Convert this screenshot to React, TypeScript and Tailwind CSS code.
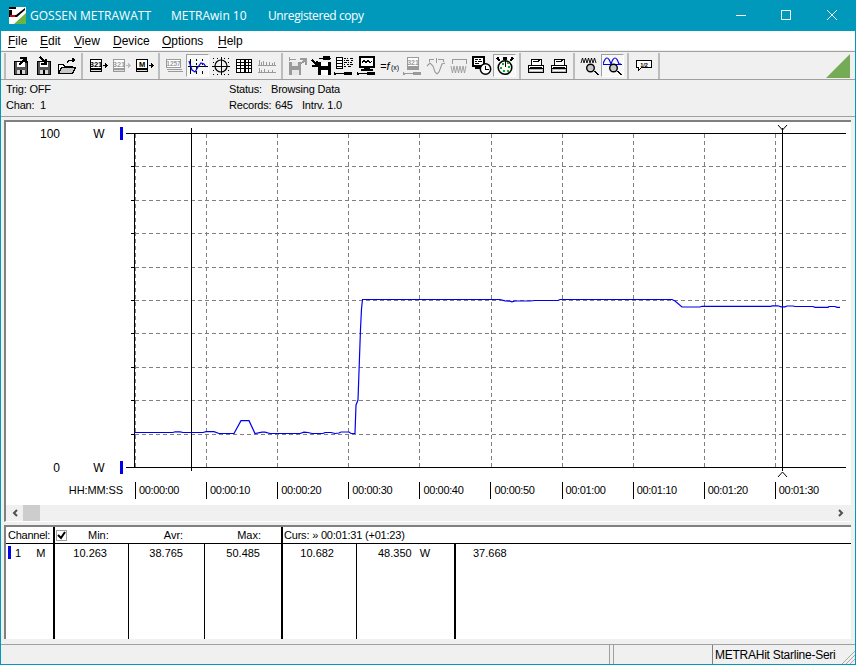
const ui = { fontFamily: '"Liberation Sans", Arial, sans-serif' };

const Ico = ({ children }: { children: React.ReactNode }) => (
  <svg width="20" height="20" viewBox="0 0 20 20" shapeRendering="crispEdges" fill="none">
    {children}
  </svg>
);

const Btn = ({ children, active }: { children: React.ReactNode; active?: boolean }) => (
  <div
    className={
      "w-[23px] h-[23px] flex items-center justify-center " +
      (active ? "bg-[#f8f8f8] border border-t-[#a0a0a0] border-l-[#a0a0a0] border-r-white border-b-white" : "")
    }
  >
    {children}
  </div>
);

const Sep = () => (
  <div className="w-[8px] h-[26px] flex justify-center">
    <div className="w-[2px] h-full bg-[#bcbcbc]" />
  </div>
);

const Floppy = ({ c = "#000", down }: { c?: string; down?: boolean }) => (
  <Ico>
    <path d="M3.5 5.5h13v13h-13z" fill="#555" stroke={c} />
    <path d="M6 6h8v5H6z" fill="#fff" />
    <path d="M6 14h8v4H6z" fill="#d8d8d8" />
    <path d="M9 14h2v4H9z" fill={c} />
    {down ? (
      <path d="M6 1l6 6M12 3v5H7" stroke={c} strokeWidth="2" />
    ) : (
      <path d="M8 9l6-6M9 2h6v5" stroke={c} strokeWidth="2" />
    )}
  </Ico>
);

const Device = ({ c = "#000", label = "321", arrow = true, x }: { c?: string; label?: string; arrow?: boolean; x?: boolean }) => (
  <Ico>
    <path d="M2 3h12v13H2z" fill={c} />
    <path d="M3 4h10v8H3z" fill="#fff" />
    <text x="8" y="11" textAnchor="middle" fontSize="7.5" fontWeight="700" fill={c} style={ui}>
      {label}
    </text>
    <path d="M3 14h10" stroke="#ddd" />
    {arrow && <path d="M15 9h2M17 7v5M18 8v3M19 9v1" stroke={x ? "#bbb" : c} />}
  </Ico>
);

const Probe = ({ c = "#000" }: { c?: string }) => (
  <>
    <path d="M0 17.5h14" stroke={c} />
    <path d="M10 16h8v3h-8z" fill={c} />
    <path d="M0 16v3M1 16.5v2" stroke={c} />
  </>
);

const Printer = () => (
  <Ico>
    <path d="M5.5 3.5h10v6h-10z" fill="#fff" stroke="#000" />
    <path d="M7 6l2-1 2 1 3-2" stroke="#000" />
    <path d="M2.5 9.5h15v3h-15z" fill="#fff" stroke="#000" />
    <path d="M2.5 12.5h15v4h-15z" fill="#bbb" stroke="#000" />
    <path d="M4 11h12" stroke="#000" />
    <path d="M4 14.5h12" stroke="#fff" />
  </Ico>
);

const Magnifier = () => (
  <>
    <circle cx="10.5" cy="12" r="3.8" fill="#c8c8c8" stroke="#000" strokeWidth="1.4" shapeRendering="auto" />
    <path d="M14 15l4 4M15 15l4 4" stroke="#000" />
  </>
);

const Toolbar = () => (
  <div className="h-[29px] border-y border-[#a0a0a0] flex items-center shrink-0 pr-[5px]">
    <Sep />
    <Btn><Floppy /></Btn>
    <Btn><Floppy down /></Btn>
    <Btn>
      <Ico>
        <path d="M1.5 8.5h5l1 2h8v7h-14z" fill="#fff" stroke="#000" />
        <path d="M1.5 17.5l3-6h14l-3 6z" fill="#c8c8c8" stroke="#000" />
        <path d="M10 7l2-3h3M15 2v4l3-2z" stroke="#000" />
      </Ico>
    </Btn>
    <Sep />
    <Btn><Device /></Btn>
    <Btn><Device c="#9a9a9a" x /></Btn>
    <Btn><Device label="M" /></Btn>
    <Sep />
    <Btn>
      <Ico>
        <path d="M1.5 3.5h14v8h-14z" fill="#fff" stroke="#9a9a9a" />
        <text x="8.5" y="10" textAnchor="middle" fontSize="6.5" fontWeight="700" fill="#9a9a9a" style={ui}>1257</text>
        <path d="M2 13.5h15M3 15.5h15" stroke="#9a9a9a" />
      </Ico>
    </Btn>
    <Btn active>
      <Ico>
        <path d="M2 3v15M8 3v2M8 7v2M8 11v2M8 15v3M14 3v2M14 7v2M14 15v3" stroke="#000" />
        <path d="M0 10h20" stroke="#000" />
        <path d="M1 5l3 9 3 2 3-5 3-4 3 1 2 3" stroke="#0000e0" strokeWidth="1.2" shapeRendering="auto" />
      </Ico>
    </Btn>
    <Btn>
      <Ico>
        <circle cx="10" cy="10" r="6" stroke="#000" strokeWidth="1.2" shapeRendering="auto" />
        <path d="M10 1v18M1 10h18" stroke="#000" />
        <path d="M2 2h1M6 2h1M13 2h1M17 2h1M2 6h1M17 6h1M2 14h1M17 14h1M2 18h1M6 18h1M13 18h1M17 18h1" stroke="#000" />
      </Ico>
    </Btn>
    <Btn>
      <Ico>
        <path d="M2.5 3.5h15v13h-15z" fill="#fff" stroke="#000" />
        <path d="M2 6.5h16M2 9.5h16M2 12.5h16" stroke="#000" />
        <path d="M6.5 3v14M10.5 3v14M11.5 3v14M14.5 3v14" stroke="#000" />
      </Ico>
    </Btn>
    <Btn>
      <Ico>
        <path d="M2 4v5M4 6v3M6 5v4M9 6v3M12 6v3M15 7v2M17 6v3M2 12v4M4 14v2M7 13v3M11 14v2M15 14v2" stroke="#9a9a9a" />
        <path d="M1 9.5h18M1 16.5h18" stroke="#9a9a9a" />
      </Ico>
    </Btn>
    <Sep />
    <Btn>
      <Ico>
        <path d="M1 3h7M1 1v4" stroke="#9a9a9a" />
        <path d="M1 6h12v13H1z" fill="#9a9a9a" />
        <path d="M4 6h6v4H4zM4 14h7v5H4z" fill="#e8e8e8" />
        <path d="M10 10l7-6M12 3h6v6" stroke="#9a9a9a" strokeWidth="2" />
      </Ico>
    </Btn>
    <Btn>
      <Ico>
        <path d="M8 2h12" stroke="#000" />
        <path d="M12 0h7v4h-7z" fill="#000" />
        <path d="M7 6h13v13H7z" fill="#000" />
        <path d="M10 6h7v4h-7zM10 14h7v5h-7z" fill="#fff" />
        <path d="M1 4l5 5M6 5v5H1" stroke="#000" strokeWidth="2" />
      </Ico>
    </Btn>
    <Btn>
      <Ico>
        <path d="M2 1h6v11H2z" fill="#fff" stroke="#000" />
        <path d="M2 4h6M2 7h6M2 10h6" stroke="#000" />
        <path d="M10 2h2M13 2h1M16 2h3M10 4h1M12 4h3M17 4h2M10 6h3M14 6h1M16 6h2M10 8h1M13 8h2M16 8h3M10 10h2M14 10h3" stroke="#000" />
        <Probe />
      </Ico>
    </Btn>
    <Btn>
      <Ico>
        <path d="M3 1h14v10H3z" fill="#fff" stroke="#000" strokeWidth="1.5" />
        <path d="M5 7l2-3 2 3 2-3 2 3 2-2" stroke="#000" />
        <path d="M7 12h6v1H7zM4 13h12v2H4z" fill="#000" />
        <Probe />
      </Ico>
    </Btn>
    <Btn>
      <svg width="22" height="20" viewBox="0 0 22 20">
        <text x="1" y="14" fontSize="11" fontStyle="italic" fill="#000" style={ui}>=f</text>
        <text x="12" y="14" fontSize="7" fill="#000" style={ui}>(x)</text>
      </svg>
    </Btn>
    <Btn>
      <Ico>
        <path d="M4 1h12v13H4z" fill="#9a9a9a" />
        <path d="M5 2h10v8H5z" fill="#fff" />
        <text x="10" y="9" textAnchor="middle" fontSize="7" fontWeight="700" fill="#9a9a9a" style={ui}>321</text>
        <Probe c="#9a9a9a" />
      </Ico>
    </Btn>
    <Btn>
      <Ico>
        <path d="M3 3h5M12 3h5M3 3v3M17 3v3M10 2v5" stroke="#9a9a9a" />
        <path d="M1 10l3-3 3 3 2 6 2 2 2-2 3-8 3-1" stroke="#9a9a9a" strokeWidth="1.1" shapeRendering="auto" />
      </Ico>
    </Btn>
    <Btn>
      <Ico>
        <path d="M3 3.5h14M3 3v5M17 3v5" stroke="#9a9a9a" />
        <path d="M2 10l1.500 7 1.500-7 1.500 7 1.500-7 1.500 7 1.500-7 1.500 7 1.500-7 1.500 7 1.500-7" stroke="#9a9a9a" strokeWidth="0.9" shapeRendering="auto" />
      </Ico>
    </Btn>
    <Btn>
      <Ico>
        <path d="M1 1h11v9H1z" fill="#fff" stroke="#000" strokeWidth="1.4" />
        <path d="M3 3h3M7 3h2M3 5h2M6 5h4M3 7h4" stroke="#000" />
        <path d="M3 11h8v2H3z" fill="#000" />
        <circle cx="13.5" cy="13" r="5.2" fill="#fff" stroke="#000" strokeWidth="1.5" shapeRendering="auto" />
        <path d="M13.5 10v3.5h3" stroke="#000" />
      </Ico>
    </Btn>
    <Btn active>
      <Ico>
        <path d="M8 1h4v3h-4z" fill="#000" />
        <path d="M2 2l3 3M18 2l-3 3M3 2h1M16 2h1" stroke="#000" strokeWidth="1.6" />
        <circle cx="10" cy="11.5" r="6.8" fill="#fff" stroke="#000" strokeWidth="1.6" shapeRendering="auto" />
        <path d="M7 7h2v2H7zM12 6h2v2h-2zM5 11h2v2H5zM13 10h2v2h-2zM8 14h2v2H8zM12 14h2v2h-2z" fill="#10b020" />
        <path d="M10 5v6" stroke="#000" />
      </Ico>
    </Btn>
    <Sep />
    <Btn><Printer /></Btn>
    <Btn><Printer /></Btn>
    <Sep />
    <Btn>
      <Ico>
        <path d="M1 7l1.500-5 1.500 5 1.500-5 1.500 5 1.500-5 1.500 5 1.500-5 1.500 5 1.500-5 1.500 5" stroke="#000" strokeWidth="0.9" shapeRendering="auto" />
        <Magnifier />
      </Ico>
    </Btn>
    <Btn active>
      <Ico>
        <path d="M0 8c1-3 2-6 4-6s3 3 4 6M8 8c1-3 2-6 4-6s3 3 4 6l2 0" stroke="#0000e0" strokeWidth="1.2" shapeRendering="auto" />
        <path d="M0 8h19" stroke="#0000e0" />
        <Magnifier />
      </Ico>
    </Btn>
    <Sep />
    <Btn>
      <Ico>
        <path d="M2.500 4.500h15v7h-10l-3 3v-3h-2z" fill="#fff" stroke="#000" />
        <text x="10" y="10.500" textAnchor="middle" fontSize="5.5" fontWeight="700" fill="#000" style={ui}>1/2</text>
      </Ico>
    </Btn>
    <Sep />
    <svg className="ml-auto" width="24" height="24" viewBox="0 0 24 24">
      <path d="M24 0v24H0z" fill="#76ab56" />
    </svg>
  </div>
);

const Menu = () => {
  const items: [string, string, string][] = [
    ["F", "ile", "w-[32px]"],
    ["E", "dit", "w-[34px]"],
    ["V", "iew", "w-[39px]"],
    ["D", "evice", "w-[49px]"],
    ["O", "ptions", "w-[56px]"],
    ["H", "elp", "w-[40px]"],
  ];
  return (
    <div className="h-[19px] bg-white flex items-center pl-[7px] text-[12px] text-black shrink-0">
      {items.map(([k, rest, w]) => (
        <span key={k} className={w}>
          <u className="underline-offset-2">{k}</u>
          {rest}
        </span>
      ))}
    </div>
  );
};

const gridX = [206.5, 277.5, 348.5, 419.5, 491.5, 562.5, 633.5, 704.5, 775.5];
const gridY = [166.5, 200.5, 233.5, 267.5, 300.5, 333.5, 367.5, 400.5, 434.5];
const trace =
  "134,432.5 173,432.5 175,431.8 180,431.8 183,432.5 203,432.5 206,431.7 214,431.7 219,433.5 234,433.5 241,420.7 249,420.7 255,433.5 262,432.2 265,432.2 270,433.5 300,433.5 304,432.2 308,432.5 312,433.5 323,433.5 325,432.5 331,432.5 335,433.5 339,433 341,432 349,432 351,433.5 355,433.5 356,405 358,400 360.5,329 361.5,309 362.5,299.5 500,299.5 505,300.8 510,301.2 512,301.8 515,301 530,301 535,300.5 558,300.5 560,299.5 672,299.5 675,301 682,307 700,307 702,306.3 771,306.3 772,305.8 778,305.8 781,306.8 785,306.8 787,306 793,306 795,306.5 813,306.5 815,307.3 828,307.3 829,306.5 835,306.5 837,307.4 840,307.4";

const Plot = () => (
  <svg width="725" height="360" viewBox="126 122 725 360" className="shrink-0">
    <g shapeRendering="crispEdges" stroke="#808080" strokeDasharray="4 3">
      <path d="M135.5 134V467" />
      {gridX.map((x) => (
        <path key={x} d={`M${x} 134V467`} />
      ))}
      {gridY.map((y) => (
        <path key={y} d={`M135 ${y}H846`} />
      ))}
    </g>
    <g shapeRendering="crispEdges" stroke="#000">
      <path d="M126 133.5H846M126 467.5H846M134.5 133V467" />
      {gridY.map((y) => (
        <path key={y} d={`M131 ${y}H134`} />
      ))}
      <path d="M191.5 128V471M782.5 128V471" />
    </g>
    <polyline points={trace} fill="none" stroke="#0000f0" strokeWidth="1.2" />
    <path d="M778 125l4.5 5 4.5-5M778 477l4.5-5 4.5 5" fill="none" stroke="#000" />
  </svg>
);

const YLabel = ({ v }: { v: string }) => (
  <div className="flex items-center h-[13px] text-[12px] text-black">
    <span className="w-[54px] text-right">{v}</span>
    <span className="ml-[33px] w-[12px] text-center">W</span>
    <span className="ml-[15px] w-[3px] h-[13px] bg-[#0000f0]" />
  </div>
);

const times = ["00:00:00", "00:00:10", "00:00:20", "00:00:30", "00:00:40", "00:00:50", "00:01:00", "00:01:10", "00:01:20", "00:01:30"];

const ChartPanel = () => (
  <div className="mx-[3px] mt-[3px] w-[847px] h-[402px] border-t-2 border-l-2 border-[#808080] flex flex-col shrink-0 border-b border-b-white">
    <div className="h-[383px] bg-white flex flex-col">
      <div className="flex">
        <div className="w-[120px] h-[352px] pt-[5px] flex flex-col justify-between">
          <YLabel v="100" />
          <YLabel v="0" />
        </div>
        <Plot />
      </div>
      <div className="flex items-center h-[17px] text-[11px] text-black">
        <span className="w-[117px] text-right tracking-[-0.1px]">HH:MM:SS</span>
        <div className="w-[12px]" />
        {times.map((t) => (
          <span key={t} className="w-[71.1px] h-[17px] border-l border-black pl-[3px] leading-[17px] tracking-[-0.35px] shrink-0">
            {t}
          </span>
        ))}
      </div>
    </div>
    <div className="h-[16px] flex items-center relative">
      <svg className="ml-[5px]" width="8" height="10" viewBox="0 0 8 10">
        <path d="M6 2L3 5l3 3" fill="none" stroke="#505050" strokeWidth="2" />
      </svg>
      <div className="ml-[4px] w-[17px] h-[16px] bg-[#cdcdcd]" />
      <svg className="ml-auto mr-[6px]" width="8" height="10" viewBox="0 0 8 10">
        <path d="M2 2l3 3-3 3" fill="none" stroke="#505050" strokeWidth="2" />
      </svg>
    </div>
  </div>
);

const Col = ({ children, className }: { children?: React.ReactNode; className: string }) => (
  <div className={"h-full flex shrink-0 " + className}>{children}</div>
);

const TablePanel = () => (
  <div className="mx-[3px] mt-[3px] w-[847px] h-[114px] border-t-2 border-l-2 border-[#808080] bg-white flex flex-col text-[11px] text-black shrink-0">
    <div className="h-[17px] border-b border-black flex items-center shrink-0">
      <Col className="w-[49px] border-r-2 border-black items-center pl-[2px] tracking-[-0.25px]">Channel:</Col>
      <Col className="w-[228px] border-r-2 border-black items-center pl-px">
        <svg width="11" height="11" viewBox="0 0 11 11" shapeRendering="crispEdges">
          <path d="M.5.5h10v10H.5z" fill="#fff" stroke="#a0a0a0" />
          <path d="M2 5l3 3 4-6" fill="none" stroke="#000" strokeWidth="2" shapeRendering="auto" />
        </svg>
        <span className="ml-[21px]">Min:</span>
        <span className="ml-[55px]">Avr:</span>
        <span className="ml-[54px]">Max:</span>
      </Col>
      <span className="ml-[1px] tracking-[-0.2px]">
        Curs: » 00:01:31 (+01:23)
      </span>
    </div>
    <div className="flex-1 flex min-h-0 text-[11px]">
      <Col className="w-[49px] border-r-2 border-black pt-[2px] pl-[2px]">
        <span className="w-[3px] h-[13px] bg-[#0000f0]" />
        <span className="ml-[4px] leading-[15px]">1</span>
        <span className="ml-[15px] leading-[15px]">M</span>
      </Col>
      <Col className="w-[74px] border-r border-black justify-end pr-[21px] pt-[2px] leading-[15px]">10.263</Col>
      <Col className="w-[76px] border-r border-black justify-end pr-[21px] pt-[2px] leading-[15px]">38.765</Col>
      <Col className="w-[78px] border-r-2 border-black justify-end pr-[21px] pt-[2px] leading-[15px]">50.485</Col>
      <Col className="w-[74px] border-r border-black justify-end pr-[22px] pt-[2px] leading-[15px]">10.682</Col>
      <Col className="w-[99px] border-r-2 border-black pl-[21px] pt-[2px] leading-[15px]">
        48.350<span className="ml-[8px]">W</span>
      </Col>
      <Col className="pl-[17px] pt-[2px] leading-[15px]">37.668</Col>
    </div>
  </div>
);

const StatusBar = () => (
  <div className="mt-[5px] flex-1 flex border-t border-[#a0a0a0] text-[12px] text-black">
    <div className="w-[609px] border-r border-[#a0a0a0]" />
    <div className="ml-[3px] w-[99px] border-l border-[#a0a0a0]" />
    <div className="flex-1 border-l border-[#808080] pl-[2px] flex items-center relative tracking-[-0.25px]">
      METRAHit Starline-Seri
      <svg className="absolute right-0 bottom-0" width="14" height="14" viewBox="0 0 14 14">
        <path d="M14 1L1 14M14 5l-9 9M14 9l-5 5" stroke="#a8a8a8" fill="none" />
      </svg>
    </div>
  </div>
);

export default function App() {
  return (
    <div
      className="w-[856px] h-[665px] bg-[#f0f0f0] border-x border-b border-[#0099bc] flex flex-col overflow-hidden"
      style={ui}
    >
      {/* title bar */}
      <div
        className="h-[31px] -mx-px bg-[#0099bc] flex items-center text-white text-[12px] shrink-0"
        style={{ fontFamily: '"Open Sans", sans-serif' }}
      >
        <svg className="ml-[9px]" width="17" height="17" viewBox="0 0 17 17">
          <path d="M0 0h17v17H0z" fill="#fff" />
          <path d="M0 0h7v2H0zM0 3h3v5H0z" fill="#000" />
          <path d="M17 17H5L17 6z" fill="#6db33f" />
          <path d="M0 8h7l9-7v2l-8 7H0z" fill="#000" />
          <path d="M1 8h5v2H1z" fill="#e00000" />
        </svg>
        <span className="ml-[4px] w-[141px]">GOSSEN METRAWATT</span>
        <span className="w-[97px]">METRAwin 10</span>
        <span className="tracking-[-0.4px]">Unregistered copy</span>
        <div className="ml-auto flex items-center">
          <svg width="46" height="31" viewBox="0 0 46 31">
            <path d="M18 15.5h10" stroke="#fff" />
          </svg>
          <svg width="46" height="31" viewBox="0 0 46 31">
            <path d="M17.5 10.500h9v9h-9z" fill="none" stroke="#fff" />
          </svg>
          <svg width="46" height="31" viewBox="0 0 46 31">
            <path d="M17 10l10 10M27 10L17 20" stroke="#fff" />
          </svg>
        </div>
      </div>

      <Menu />
      <div className="h-px shrink-0" />
      <Toolbar />

      {/* trigger and record info */}
      <div className="h-[37px] border-b border-[#a0a0a0] flex text-[11px] text-black pl-[5px] leading-[16px] pt-[1px] shrink-0 tracking-[-0.2px]">
        <div className="w-[223px] flex flex-col">
          <span>Trig: OFF</span>
          <span>Chan:&nbsp; 1</span>
        </div>
        <div className="flex flex-col">
          <div className="flex">
            <span className="w-[42px]">Status:</span>
            <span>Browsing Data</span>
          </div>
          <div className="flex">
            <span className="w-[46px]">Records:</span>
            <span className="w-[27px]">645</span>
            <span>Intrv. 1.0</span>
          </div>
        </div>
      </div>

      <ChartPanel />
      <TablePanel />
      <StatusBar />
    </div>
  );
}
